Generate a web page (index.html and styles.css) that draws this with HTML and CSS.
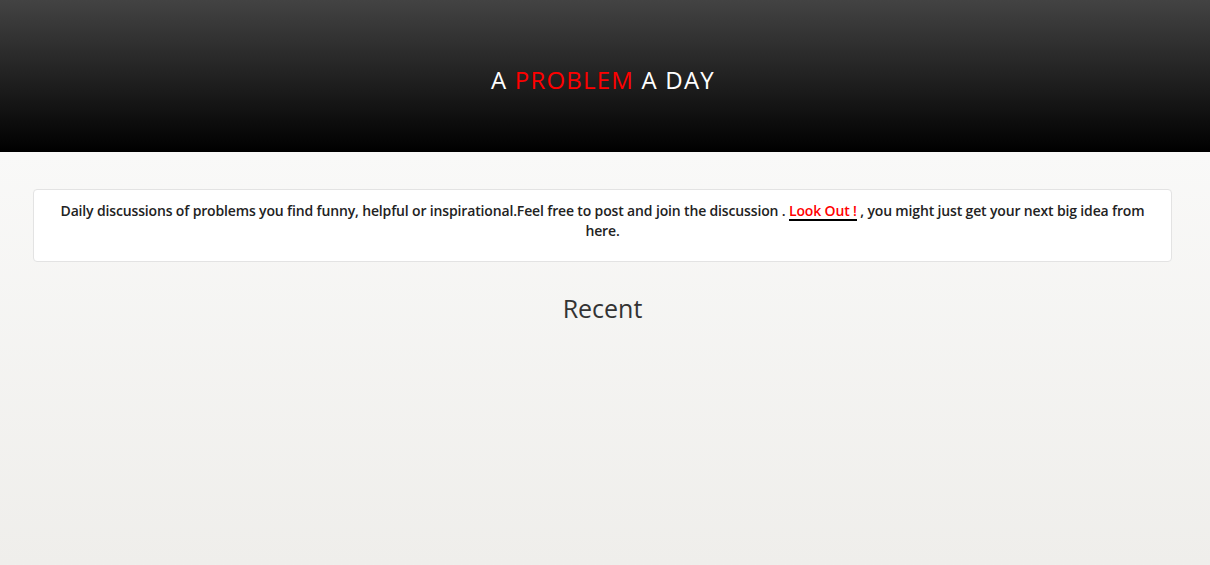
FILE: index.html
```html
<!DOCTYPE html>
<html>
<head>
    <title>A Problem A Day</title>
    <link rel="stylesheet" href="styles.css">
</head>
<body>
    <header class="masthead">
        <h1 class="brand">A <span class="accent">PROBLEM</span> A DAY</h1>
    </header>

    <main class="page">
        <div class="intro">
            Daily discussions of problems you find funny, helpful or inspirational.Feel free to post and join the discussion . <a href="#" class="look-out">Look Out !</a> , you might just get your next big idea from here.
        </div>

        <h2 class="section-title">Recent</h2>
    </main>
</body>
</html>
```

FILE: styles.css
```css
:root {
    --accent: #ff0000;
    --text: #333333;
    --border: #e3e3e3;
}

html, body {
    margin: 0;
    padding: 0;
}

body {
    font-family: 'Open Sans', 'DejaVu Sans', sans-serif;
    color: var(--text);
    min-height: 565px;
    background: linear-gradient(to bottom, #f9f9f8 152px, #efeeeb 100%);
}

.masthead {
    height: 152px;
    background: linear-gradient(to bottom, #434343, #000000);
    display: flex;
    align-items: center;
    justify-content: center;
}

.brand {
    margin: 6px 4px 0 0;
    color: #ffffff;
    font-size: 24px;
    font-weight: 400;
    letter-spacing: 1.2px;
}

.accent {
    color: var(--accent);
}

.page {
    padding: 37px 38px 0 33px;
}

.intro {
    background: #ffffff;
    border: 1px solid var(--border);
    border-radius: 4px;
    padding: 11px 20px 20px;
    text-align: center;
    font-size: 14px;
    font-weight: 600;
    line-height: 20px;
    letter-spacing: -0.15px;
    color: #222;
}

.look-out {
    display: inline-block;
    line-height: 16px;
    color: var(--accent);
    text-decoration: none;
    border-bottom: 2px solid #000;
}

.section-title {
    margin: 29px 0 0;
    text-align: center;
    font-size: 25px;
    font-weight: 400;
    color: var(--text);
}
```
